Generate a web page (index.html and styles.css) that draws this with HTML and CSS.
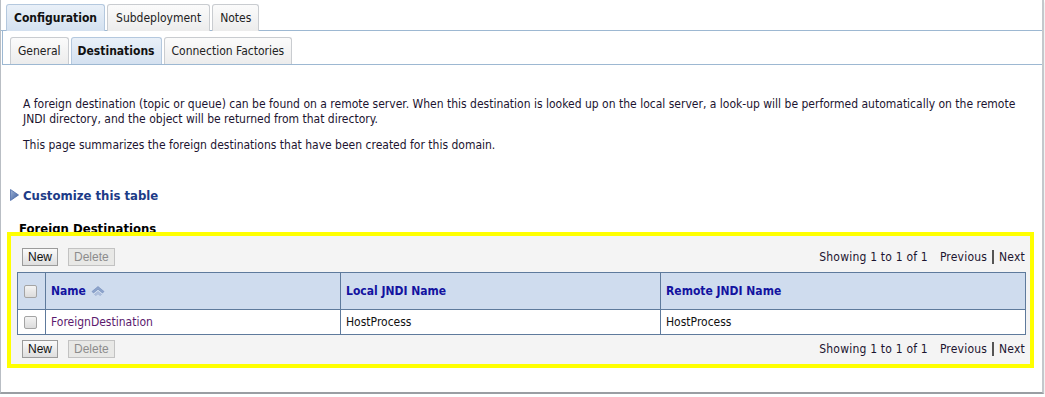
FILE: index.html
```html
<!DOCTYPE html>
<html>
<head>
<meta charset="utf-8">
<link rel="stylesheet" href="styles.css">
</head>
<body>
<div class="page">
  <div class="tabs">
    <div class="tab active">Configuration</div>
    <div class="tab">Subdeployment</div>
    <div class="tab">Notes</div>
  </div>
  <div class="subpanel">
    <div class="subtabs">
      <div class="tab sub">General</div>
      <div class="tab sub active">Destinations</div>
      <div class="tab sub">Connection Factories</div>
    </div>
  </div>
  <div class="content">
    <p class="intro">A foreign destination (topic or queue) can be found on a remote server. When this destination is looked up on the local server, a look-up will be performed automatically on the remote JNDI directory, and the object will be returned from that directory.</p>
    <p class="intro second">This page summarizes the foreign destinations that have been created for this domain.</p>
    <div class="customize">
      <svg class="tri" width="9" height="12" viewBox="0 0 9 12"><defs><linearGradient id="g" x1="0" y1="0" x2="1" y2="1"><stop offset="0" stop-color="#9fb4d8"/><stop offset="1" stop-color="#3d5c9a"/></linearGradient></defs><path d="M0.5 0.5 L8.5 6 L0.5 11.5 Z" fill="url(#g)" stroke="#4a6aa8" stroke-width="0.8"/></svg>
      <span>Customize this table</span>
    </div>
    <div class="section-title">Foreign Destinations</div>
    <div class="highlight">
      <div class="panel">
        <div class="toolbar">
          <div class="btns"><span class="btn">New</span><span class="btn disabled">Delete</span></div>
          <div class="pager">Showing 1 to 1 of 1<span class="prev">Previous</span><span class="bar"></span>Next</div>
        </div>
        <table class="grid">
          <colgroup><col class="c0"><col class="c1"><col class="c2"><col class="c3"></colgroup>
          <thead>
            <tr>
              <th class="chk"><span class="box"></span></th>
              <th>Name <svg class="sort" width="16" height="11" viewBox="0 0 16 11"><path d="M2 6.5 L8 1.5 L14 6.5 L12.5 8 L8 4.2 L3.5 8 Z" fill="#8ea5cc" stroke="#6f88b8" stroke-width="0.6"/><path d="M4.5 9.5 L8 6.5 L11.5 9.5 L10.2 10.6 L8 8.8 L5.8 10.6 Z" fill="#b4c4e0" stroke="#8aa0c8" stroke-width="0.5"/></svg></th>
              <th>Local JNDI Name</th>
              <th>Remote JNDI Name</th>
            </tr>
          </thead>
          <tbody>
            <tr>
              <td class="chk"><span class="box"></span></td>
              <td class="link">ForeignDestination</td>
              <td>HostProcess</td>
              <td>HostProcess</td>
            </tr>
          </tbody>
        </table>
        <div class="toolbar bottom">
          <div class="btns"><span class="btn">New</span><span class="btn disabled">Delete</span></div>
          <div class="pager">Showing 1 to 1 of 1<span class="prev">Previous</span><span class="bar"></span>Next</div>
        </div>
      </div>
    </div>
  </div>
</div>
</body>
</html>
```
FILE: styles.css
```css
* { box-sizing: border-box; }
body {
  margin: 0;
  background: #ffffff;
  font-family: "DejaVu Sans Condensed", "DejaVu Sans", Tahoma, sans-serif;
  font-size: 12px;
  color: #1a1a1a;
}
.page {
  width: 1044px;
  height: 394px;
  border-left: 1px solid #b9bec4;
  border-right: 2px solid #c4c8cc;
  border-bottom: 2px solid #9a9ea3;
  box-shadow: 0 2px 2px #d8d8d8;
  background: #fff;
}
.tabs {
  display: flex;
  gap: 2px;
  padding: 4px 0 0 5px;
  height: 31px;
  border-bottom: 1px solid #9db8d2;
}
.tab {
  height: 27px;
  padding: 0 7px;
  display: flex;
  align-items: center;
  border: 1px solid #c9ccd0;
  border-bottom: none;
  border-radius: 3px 3px 0 0;
  background: linear-gradient(#fbfbfb, #ececec);
  color: #222;
}
.tab.active {
  font-weight: bold;
  background: linear-gradient(#e9f0f8, #d4e1f0);
  border-color: #b4c8de;
  color: #111;
}
.tabs .tab:nth-child(2) { padding: 0 8px; }
.subpanel {
  margin-left: 1px;
  border-left: 1px solid #9db8d2;
  border-bottom: 1px solid #9db8d2;
  height: 34px;
}
.subtabs {
  display: flex;
  gap: 2px;
  padding: 6px 0 0 7px;
}
.tab.sub { height: 27px; padding: 0 7px; }
.tab.sub.active { padding: 0 6px; }
.intro {
  margin: 32px 0 0 22px;
  width: 1005px;
  line-height: 15px;
  color: #1c1430;
}
.intro.second { margin-top: 11px; }
.customize {
  display: flex;
  align-items: center;
  gap: 4px;
  margin: 34px 0 0 9px;
  font-weight: bold;
  font-size: 13px;
  color: #1d3b87;
  height: 16px;
}
.tri { display: block; }
.section-title {
  margin: 19px 0 0 18px;
  font-weight: bold;
  font-size: 13px;
  color: #000;
  height: 10px;
  line-height: 13px;
}
.highlight {
  position: relative;
  margin: 0 0 0 6px;
  width: 1027px;
  border: 4px solid #ffff00;
  height: 136px;
  background: #f4f4f4;
}
.panel {
  padding: 9px 4px 0 6px;
}
.toolbar {
  display: flex;
  justify-content: space-between;
  align-items: center;
  height: 21px;
  margin-top: 1px;
  padding: 0 1px 0 5px;
}
.toolbar.bottom { margin-top: 3px; }
.btns { display: flex; gap: 10px; }
.btn {
  display: inline-flex;
  align-items: center;
  justify-content: center;
  height: 18px;
  padding: 0 5px;
  border: 1px solid #9b9b9b;
  background: linear-gradient(#fafafa, #dedede);
  color: #111;
  font-family: "Liberation Sans", Arial, sans-serif;
  font-size: 12px;
}
.btn.disabled {
  color: #8c8c8c;
  border-color: #c2c2c2;
  background: #e8e8e6;
}
.pager {
  display: flex;
  align-items: center;
  color: #1c1430;
  letter-spacing: 0.2px;
}
.prev { margin-left: 12px; }
.bar {
  display: inline-block;
  width: 2px;
  height: 14px;
  background: #555;
  margin: 0 5px 0 5px;
}
.grid {
  margin-top: 5px;
  width: 1008px;
  border-collapse: collapse;
  table-layout: fixed;
  border: 1px solid #5e7a9c;
}
.c0 { width: 28px; }
.c1 { width: 295px; }
.c2 { width: 320px; }
.c3 { width: 365px; }
.grid th {
  height: 37px;
  background: #cfdcee;
  color: #1313a0;
  font-weight: bold;
  text-align: left;
  padding: 0 5px;
  border: 1px solid #5e7a9c;
  font-size: 12px;
}
.grid td {
  height: 25px;
  background: #fff;
  padding: 0 5px;
  border: 1px solid #5e7a9c;
  color: #111;
}
.grid .chk { padding: 0 0 0 6px; }
.grid td.link { color: #5b1a6e; }
.box {
  display: block;
  width: 13px;
  height: 13px;
  border: 1px solid #a4a4a4;
  border-radius: 2px;
  background: linear-gradient(#f4f4f4, #dcdcdc);
}
.sort { vertical-align: -1px; }
```
